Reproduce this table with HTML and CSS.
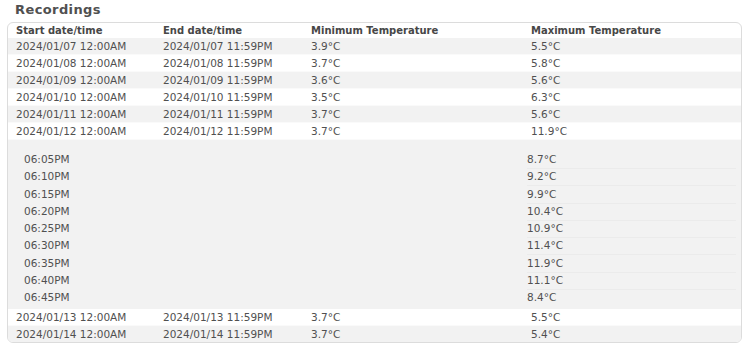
FILE: index.html
```html
<!DOCTYPE html>
<html>
<head>
<meta charset="utf-8">
<link rel="stylesheet" href="styles.css">
</head>
<body>
<h1 class="title">Recordings</h1>
<div class="table">
  <div class="row head">
    <div>Start date/time</div><div>End date/time</div><div>Minimum Temperature</div><div>Maximum Temperature</div>
  </div>
  <div class="body">
    <div class="row"><div>2024/01/07 12:00AM</div><div>2024/01/07 11:59PM</div><div>3.9°C</div><div>5.5°C</div></div>
    <div class="row"><div>2024/01/08 12:00AM</div><div>2024/01/08 11:59PM</div><div>3.7°C</div><div>5.8°C</div></div>
    <div class="row"><div>2024/01/09 12:00AM</div><div>2024/01/09 11:59PM</div><div>3.6°C</div><div>5.6°C</div></div>
    <div class="row"><div>2024/01/10 12:00AM</div><div>2024/01/10 11:59PM</div><div>3.5°C</div><div>6.3°C</div></div>
    <div class="row"><div>2024/01/11 12:00AM</div><div>2024/01/11 11:59PM</div><div>3.7°C</div><div>5.6°C</div></div>
    <div class="row"><div>2024/01/12 12:00AM</div><div>2024/01/12 11:59PM</div><div>3.7°C</div><div>11.9°C</div></div>
    <div class="detail">
      <div class="sub"><div>06:05PM</div><div>8.7°C</div></div>
      <div class="sub"><div>06:10PM</div><div>9.2°C</div></div>
      <div class="sub"><div>06:15PM</div><div>9.9°C</div></div>
      <div class="sub"><div>06:20PM</div><div>10.4°C</div></div>
      <div class="sub"><div>06:25PM</div><div>10.9°C</div></div>
      <div class="sub"><div>06:30PM</div><div>11.4°C</div></div>
      <div class="sub"><div>06:35PM</div><div>11.9°C</div></div>
      <div class="sub"><div>06:40PM</div><div>11.1°C</div></div>
      <div class="sub last"><div>06:45PM</div><div>8.4°C</div></div>
    </div>
    <div class="row"><div>2024/01/13 12:00AM</div><div>2024/01/13 11:59PM</div><div>3.7°C</div><div>5.5°C</div></div>
    <div class="row"><div>2024/01/14 12:00AM</div><div>2024/01/14 11:59PM</div><div>3.7°C</div><div>5.4°C</div></div>
  </div>
</div>
</body>
</html>
```

FILE: styles.css
```css
html, body {
  margin: 0;
  padding: 0;
  background: #fff;
}

body {
  font-family: "DejaVu Sans", Verdana, sans-serif;
  color: #505050;
}

.title {
  margin: 0 0 4px 15px;
  padding-top: 1px;
  font-size: 13px;
  line-height: 17px;
  letter-spacing: 0.4px;
  font-weight: bold;
  color: #505050;
}

.table {
  margin: 0 6px 0 7px;
  border: 1px solid #dcdcdc;
  border-radius: 6px;
  overflow: hidden;
  background: #fff;
}

.row {
  display: grid;
  grid-template-columns: 147px 148px 220px 1fr;
  padding-left: 8px;
  font-size: 10.5px;
  line-height: 16px;
  border-bottom: 1px solid #fafafa;
  white-space: nowrap;
}

.row.head {
  font-size: 10px;
  font-weight: bold;
  line-height: 15px;
  color: #474747;
  border-bottom: none;
}

.body > .row:nth-child(odd),
.body > .detail {
  background: #f2f2f2;
}

.body > .row:last-child {
  border-bottom: none;
}

.detail {
  padding: 11px 5px 3px 15px;
  font-size: 10.5px;
}

.sub {
  display: grid;
  grid-template-columns: 504px 1fr;
  height: 17.25px;
  line-height: 17px;
  white-space: nowrap;
}

.sub > div:first-child {
  padding-left: 1px;
}

.sub > div {
  border-bottom: 1px solid #ebebeb;
}

.sub > div:first-child {
  border-bottom-color: transparent;
}

.sub.last > div {
  border-bottom-color: transparent;
}
```
